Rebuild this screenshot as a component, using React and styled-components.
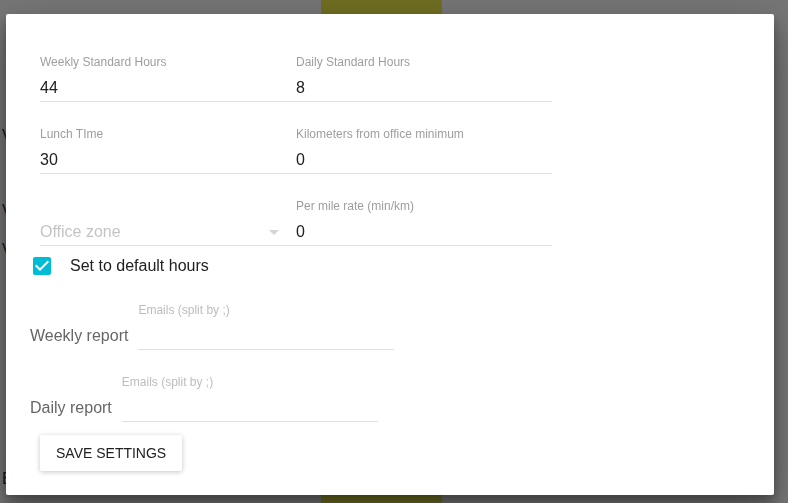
import React from "react";
import styled, { createGlobalStyle } from "styled-components";

const GlobalStyle = createGlobalStyle`
  html, body {
    margin: 0;
    padding: 0;
    width: 100%;
    height: 100%;
    overflow: hidden;
    background: #ffffff;
    font-family: "Liberation Sans", Arial, sans-serif;
  }
  #root { height: 100%; }
  * { box-sizing: border-box; }
`;

/* ---------- page behind the dialog ---------- */

const Page = styled.div`
  display: grid;
  grid-template-columns: 321px 121px 1fr;
  height: 503px;
  background: #ffffff;
`;

const PageColumn = styled.div`
  display: flex;
  flex-direction: column;
  align-items: flex-start;
  padding-left: 2px;
`;

const PageLine = styled.div`
  margin-top: ${(p) => p.$gap}px;
  font-size: 16px;
  line-height: 24px;
  color: #333333;
  white-space: nowrap;
`;

const Banner = styled.div`
  background: #f1ef4a;
`;

/* ---------- modal ---------- */

const Overlay = styled.div`
  position: fixed;
  inset: 0;
  background: rgba(0, 0, 0, 0.54);
  display: flex;
  align-items: flex-start;
  padding: 14px 0 0 6px;
`;

const Dialog = styled.div`
  width: 768px;
  background: #ffffff;
  border-radius: 2px;
  box-shadow: 0 14px 45px rgba(0, 0, 0, 0.25), 0 10px 18px rgba(0, 0, 0, 0.22),
    0 6px 10px rgba(0, 0, 0, 0.18);
  padding: 23px 24px 24px;
  display: flex;
  flex-direction: column;
`;

const FieldGrid = styled.div`
  display: grid;
  grid-template-columns: 256px 256px;
  margin-left: 10px;
`;

const Field = styled.div`
  width: 256px;
  height: 72px;
  padding-top: 17px;
  display: flex;
  flex-direction: column;
`;

const Label = styled.div`
  height: 17px;
  font-size: 12px;
  line-height: 17px;
  color: ${(p) => (p.$light ? "#bdbdbd" : "#9e9e9e")};
  white-space: nowrap;
`;

const ValueRow = styled.div`
  margin-top: 5px;
  height: 24px;
  display: flex;
  align-items: center;
  justify-content: space-between;
  font-size: 16px;
  line-height: 24px;
  color: ${(p) => (p.$placeholder ? "#c4c4c4" : "#212121")};
`;

const Underline = styled.div`
  margin-top: 1px;
  height: 1px;
  background: #e0e0e0;
`;

const ArrowIcon = styled.svg`
  width: 24px;
  height: 24px;
  margin-right: 10px;
  fill: #d4d4d4;
`;

const CheckRow = styled.label`
  display: flex;
  align-items: center;
  height: 24px;
  margin-top: 1px;
  gap: 16px;
  font-size: 16px;
  line-height: 24px;
  color: #212121;
`;

const CheckIcon = styled.svg`
  width: 24px;
  height: 24px;
  fill: #00bcd4;
`;

const ReportRow = styled.div`
  display: flex;
  align-items: flex-end;
  gap: 10px;
  margin-top: ${(p) => p.$gap || 0}px;
`;

const ReportName = styled.span`
  font-size: 16px;
  line-height: 24px;
  margin-bottom: 9px;
  color: #666666;
  white-space: nowrap;
`;

const SaveButton = styled.button`
  align-self: flex-start;
  margin: 6px 0 0 10px;
  height: 36px;
  padding: 0 16px;
  min-width: 88px;
  border: none;
  border-radius: 2px;
  background: #ffffff;
  box-shadow: 0 1px 6px rgba(0, 0, 0, 0.12), 0 1px 4px rgba(0, 0, 0, 0.12);
  font-family: "Liberation Sans", Arial, sans-serif;
  font-size: 14px;
  line-height: 36px;
  text-transform: uppercase;
  color: #212121;
  cursor: pointer;
`;

function TextField({ label, value, light }) {
  return (
    <Field>
      <Label $light={light}>{label}</Label>
      <ValueRow>{value}</ValueRow>
      <Underline />
    </Field>
  );
}

function SelectField({ placeholder }) {
  return (
    <Field>
      <Label />
      <ValueRow $placeholder>
        <span>{placeholder}</span>
        <ArrowIcon viewBox="0 0 24 24">
          <path d="M7 10l5 5 5-5z" />
        </ArrowIcon>
      </ValueRow>
      <Underline />
    </Field>
  );
}

export default function App() {
  return (
    <>
      <GlobalStyle />
      <Page>
        <PageColumn>
          <PageLine $gap={124}>V</PageLine>
          <PageLine $gap={51}>V</PageLine>
          <PageLine $gap={15}>V</PageLine>
          <PageLine $gap={205}>E</PageLine>
        </PageColumn>
        <Banner />
        <div />
      </Page>
      <Overlay>
        <Dialog>
          <FieldGrid>
            <TextField label="Weekly Standard Hours" value="44" />
            <TextField label="Daily Standard Hours" value="8" />
            <TextField label="Lunch TIme" value="30" />
            <TextField label="Kilometers from office minimum" value="0" />
            <SelectField placeholder="Office zone" />
            <TextField label="Per mile rate (min/km)" value="0" />
          </FieldGrid>
          <CheckRow>
            <CheckIcon viewBox="0 0 24 24">
              <path d="M19 3H5c-1.11 0-2 .9-2 2v14c0 1.1.89 2 2 2h14c1.11 0 2-.9 2-2V5c0-1.1-.89-2-2-2zm-9 14l-5-5 1.41-1.41L10 14.17l7.59-7.59L19 8l-9 9z" />
            </CheckIcon>
            Set to default hours
          </CheckRow>
          <ReportRow $gap={7}>
            <ReportName>Weekly report</ReportName>
            <TextField label="Emails (split by ;)" value="" light />
          </ReportRow>
          <ReportRow>
            <ReportName>Daily report</ReportName>
            <TextField label="Emails (split by ;)" value="" light />
          </ReportRow>
          <SaveButton>Save settings</SaveButton>
        </Dialog>
      </Overlay>
    </>
  );
}
